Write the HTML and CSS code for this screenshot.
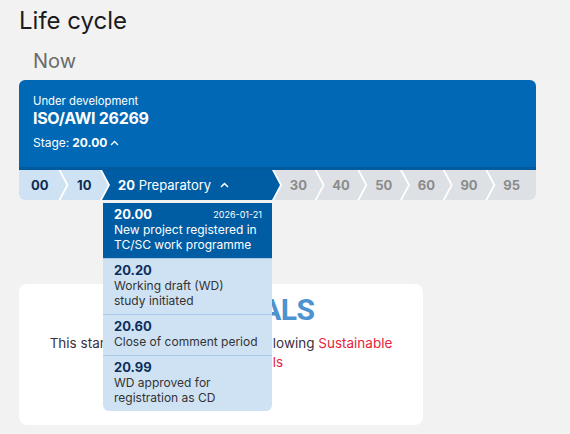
FILE: index.html
```html
<!DOCTYPE html>
<html lang="en">
<head>
<meta charset="utf-8">
<title>Life cycle</title>
<link rel="stylesheet" href="styles.css">
</head>
<body>
<div class="page">
  <h2 class="title">Life cycle</h2>
  <h3 class="now">Now</h3>
  <div class="lc-card">
    <div class="lc-head">
      <div class="status">Under development</div>
      <div class="ref">ISO/AWI 26269</div>
      <div class="stage">Stage: <b>20.00</b>
        <svg class="chev-sm" width="9" height="6" viewBox="0 0 9 6"><path d="M1 5 L4.5 1.5 L8 5" fill="none" stroke="#fff" stroke-width="1.3"/></svg>
      </div>
    </div>
    <ol class="stages">
      <li class="st done first"><span class="seg">00</span></li>
      <li class="st done"><span class="seg">10</span></li>
      <li class="st current">
        <span class="seg"><b>20</b>&nbsp;Preparatory
          <svg class="chev" width="9" height="6" viewBox="0 0 9 6"><path d="M1 5 L4.5 1.5 L8 5" fill="none" stroke="#fff" stroke-width="1.5"/></svg>
        </span>
        <ul class="dd">
          <li class="dd-item active">
            <div class="code"><span>20.00</span><span class="date">2026-01-21</span></div>
            <div class="desc">New project registered in TC/SC work programme</div>
          </li>
          <li class="dd-item">
            <div class="code"><span>20.20</span></div>
            <div class="desc">Working draft (WD)<br>study initiated</div>
          </li>
          <li class="dd-item">
            <div class="code"><span>20.60</span></div>
            <div class="desc">Close of comment period</div>
          </li>
          <li class="dd-item">
            <div class="code"><span>20.99</span></div>
            <div class="desc">WD approved for<br>registration as CD</div>
          </li>
        </ul>
      </li>
      <li class="st todo"><span class="seg">30</span></li>
      <li class="st todo"><span class="seg">40</span></li>
      <li class="st todo"><span class="seg">50</span></li>
      <li class="st todo"><span class="seg">60</span></li>
      <li class="st todo"><span class="seg">90</span></li>
      <li class="st todo last"><span class="seg">95</span></li>
    </ol>
  </div>
  <div class="sdg-card">
    <div class="sdg-title">GLOBAL GOALS</div>
    <p class="sdg-text">This standard contributes to the following <a href="#">Sustainable Development Goals</a></p>
  </div>
</div>
</body>
</html>
```
FILE: styles.css
```css
body {
  margin: 0;
  background: #f2f2f2;
  font-family: Inter, "Noto Sans", sans-serif;
}
.page {
  padding: 6px 34px 0 19px;
}
.title {
  margin: 0;
  font-size: 24px;
  line-height: 30px;
  font-weight: 400;
  color: #1b1b1b;
}
.now {
  margin: 13px 0 7px 14px;
  font-size: 20px;
  line-height: 24px;
  font-weight: 400;
  color: #6b6b6b;
}
.lc-head {
  background: #0068b4;
  color: #fff;
  border-radius: 6px 6px 0 0;
  padding: 14px 14px 16px;
  border-bottom: 3px solid #005a9e;
}
.status {
  font-size: 11.3px;
  line-height: 14px;
}
.ref {
  font-size: 16px;
  line-height: 20px;
  font-weight: 700;
  letter-spacing: -0.3px;
}
.stage {
  margin-top: 6px;
  font-size: 12px;
  line-height: 17px;
  display: flex;
  align-items: center;
}
.stage b {
  margin-left: 3px;
}
.chev-sm {
  margin-left: 3px;
}
.stages {
  list-style: none;
  margin: 0;
  padding: 0;
  display: flex;
  height: 30px;
  background: #fff;
  border-radius: 0 0 6px 6px;
}
.st {
  flex: 1 1 0;
  min-width: 0;
  margin-right: -6px;
  position: relative;
}
.st.done {
  flex: 0 0 47.5px;
}
.st.last {
  margin-right: 0;
}
.seg {
  display: flex;
  align-items: center;
  justify-content: center;
  height: 30px;
  font-size: 13px;
  font-weight: 700;
  clip-path: polygon(0 0, calc(100% - 8px) 0, 100% 50%, calc(100% - 8px) 100%, 0 100%, 8px 50%);
}
.first .seg {
  clip-path: polygon(0 0, calc(100% - 8px) 0, 100% 50%, calc(100% - 8px) 100%, 0 100%);
  border-bottom-left-radius: 6px;
  padding-right: 6px;
}
.last .seg {
  clip-path: polygon(0 0, 100% 0, 100% 100%, 0 100%, 8px 50%);
  border-bottom-right-radius: 6px;
}
.done .seg {
  background: #cfe2f3;
  color: #0b2c52;
}
.todo .seg {
  background: #dde0e4;
  color: #8b8b8b;
}
.current {
  flex: 0 0 178px;
}
.current .seg {
  background: #005da4;
  color: #fff;
  justify-content: flex-start;
  padding-left: 16px;
  font-weight: 400;
}
.current .seg b {
  font-weight: 700;
}
.chev {
  margin-left: 9px;
}
.dd {
  position: absolute;
  top: calc(100% + 3px);
  left: 1px;
  right: 8px;
  z-index: 2;
  list-style: none;
  margin: 0;
  padding: 0;
  background: #cfe2f3;
  border-radius: 0 0 6px 6px;
  overflow: hidden;
}
.dd-item {
  padding: 4px 10px 6px 11px;
  border-top: 1px solid #a8cae8;
  font-size: 12px;
  line-height: 15px;
  color: #333;
}
.dd-item.active {
  border-top: 0;
  background: #005da4;
  color: #fff;
}
.code {
  display: flex;
  justify-content: space-between;
  align-items: center;
  font-size: 13px;
  font-weight: 700;
  color: #0b2f5a;
}
.active .code {
  color: #fff;
}
.date {
  font-size: 9px;
  font-weight: 400;
}
.sdg-card {
  width: 404px;
  box-sizing: border-box;
  margin-top: 84px;
  padding: 8px 20px 53px;
  background: #fff;
  border-radius: 8px;
  text-align: center;
}
.sdg-title {
  font-family: Roboto, sans-serif;
  font-weight: 700;
  font-size: 30px;
  line-height: 36px;
  color: #4c93d0;
  letter-spacing: -0.5px;
  padding-right: 22px;
}
.sdg-text {
  margin: 6px 0 0;
  font-size: 13.5px;
  line-height: 19px;
  color: #3a3040;
}
.sdg-text a {
  color: #e5243b;
  text-decoration: none;
}
```
